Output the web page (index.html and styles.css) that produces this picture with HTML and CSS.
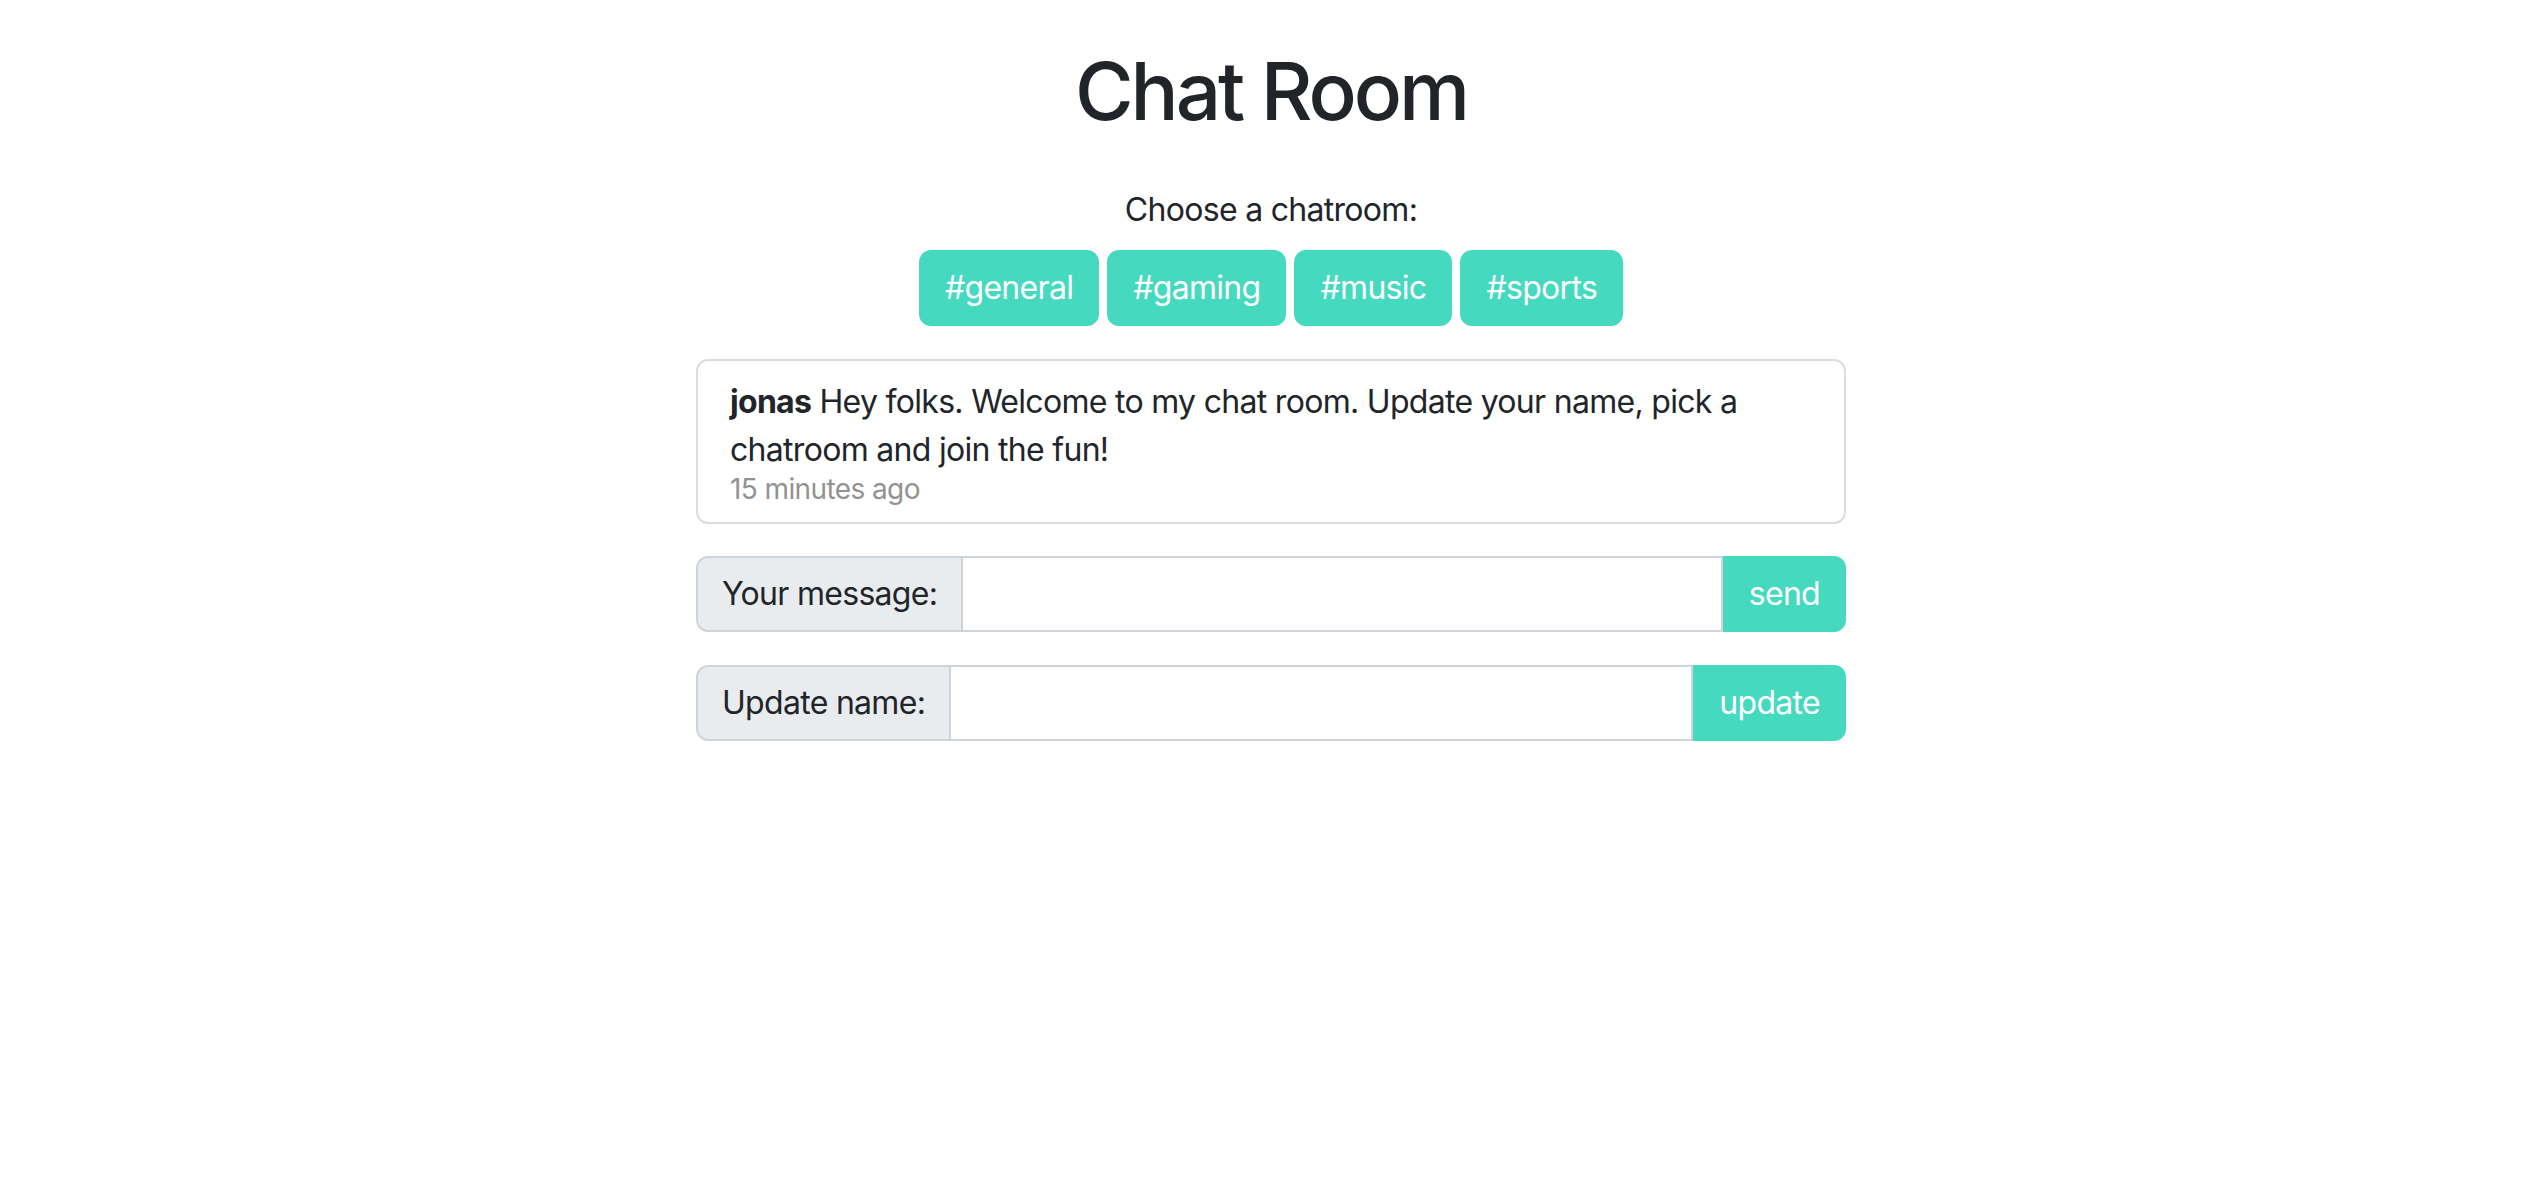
FILE: index.html
```html
<!DOCTYPE html>
<html lang="en">
<head>
<meta charset="utf-8">
<title>Chat Room</title>
<link rel="stylesheet" href="styles.css">
</head>
<body>
<main class="page">
  <h1 class="title">Chat Room</h1>
  <p class="choose">Choose a chatroom:</p>
  <div class="rooms">
    <button class="btn">#general</button>
    <button class="btn">#gaming</button>
    <button class="btn">#music</button>
    <button class="btn">#sports</button>
  </div>
  <section class="chat">
    <div class="msg">
      <p class="msg-text"><strong>jonas</strong> Hey folks. Welcome to my chat room. Update your name, pick a chatroom and join the fun!</p>
      <div class="msg-time">15 minutes ago</div>
    </div>
  </section>
  <form class="group">
    <label class="group-label">Your message:</label>
    <input class="group-input" type="text">
    <button class="btn group-btn" type="button">send</button>
  </form>
  <form class="group">
    <label class="group-label">Update name:</label>
    <input class="group-input" type="text">
    <button class="btn group-btn" type="button">update</button>
  </form>
</main>
</body>
</html>
```

FILE: styles.css
```css
* { box-sizing: border-box; }
html, body { margin: 0; padding: 0; background: #fff; }
body {
  font-family: Inter, "Liberation Sans", sans-serif;
  font-size: 32px;
  line-height: 48px;
  letter-spacing: -0.7px;
  color: #212529;
}
.page {
  width: 1150px;
  margin: 0 auto;
  padding-top: 43px;
  display: flex;
  flex-direction: column;
}
.title {
  margin: 0 0 47px;
  font-size: 80px;
  line-height: 96px;
  font-weight: 500;
  text-align: center;
  letter-spacing: -3px;
}
.choose {
  margin: 0 0 16px;
  text-align: center;
}
.rooms {
  display: flex;
  justify-content: center;
  gap: 8px;
  margin-bottom: 33px;
}
.btn {
  font-family: inherit;
  font-size: 32px;
  line-height: 48px;
  letter-spacing: -0.7px;
  color: #fff;
  background: #45d9c0;
  border: 2px solid #45d9c0;
  border-radius: 12px;
  padding: 12px 24px;
  cursor: pointer;
}
.chat {
  border: 2px solid #dcdcdc;
  border-radius: 12px;
  padding: 17px 32px 18px;
  margin-bottom: 32px;
}
.msg-text { margin: 0; line-height: 48px; }
.msg-text strong { font-weight: 700; }
.msg-time {
  font-size: 28px;
  line-height: 30px;
  letter-spacing: -0.6px;
  color: #929292;
}
.group {
  display: flex;
  height: 76px;
  margin: 0 0 33px;
}
.group-label {
  display: flex;
  align-items: center;
  padding: 0 24px;
  background: #e9ecef;
  border: 2px solid #ced4da;
  border-radius: 12px 0 0 12px;
  white-space: nowrap;
}
.group-input {
  flex: 1;
  min-width: 0;
  border: 2px solid #ced4da;
  border-left: 0;
  font-family: inherit;
  font-size: 32px;
  padding: 12px 24px;
  outline: none;
}
.group-btn {
  border-radius: 0 12px 12px 0;
  padding: 12px 24px;
}
```
